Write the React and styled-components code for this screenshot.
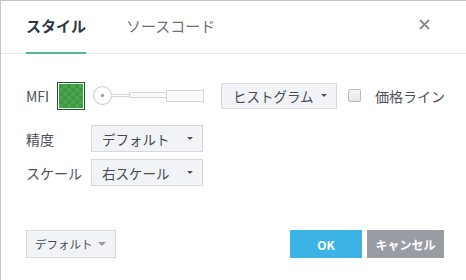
import React from "react";
import styled, { createGlobalStyle } from "styled-components";

const Global = createGlobalStyle`
  html, body { margin: 0; padding: 0; background: #fff; overflow: hidden; }
  body { font-family: "Noto Sans CJK JP", "Noto Sans", sans-serif; }
  * { box-sizing: border-box; }
`;

const Dialog = styled.div`
  width: 480px;
  height: 280px;
  border-top: 1px solid #c4c4c4;
  border-left: 1px solid #c4c4c4;
  background: #fff;
  display: flex;
  flex-direction: column;
`;

const Header = styled.div`
  height: 53px;
  border-bottom: 1px solid #e2e4e7;
  display: flex;
  align-items: stretch;
  padding-left: 25px;
  padding-right: 37px;
  width: 466px;
  flex: none;
`;

const Tab = styled.div`
  display: flex;
  align-items: center;
  font-size: 15px;
  line-height: 1;
  padding-bottom: 3px;
  margin-right: 40px;
  white-space: nowrap;
  color: ${(p) => (p.$active ? "#2e3641" : "#6a727c")};
  font-weight: ${(p) => (p.$active ? 700 : 400)};
  border-bottom: 2px solid ${(p) => (p.$active ? "#55b787" : "transparent")};
  margin-bottom: -1px;
`;

const Close = styled.div`
  margin-left: auto;
  display: flex;
  align-items: center;
  padding-bottom: 6px;
`;

const Body = styled.div`
  padding: 28px 0 0 25px;
  display: flex;
  flex-direction: column;
  gap: 7px;
`;

const Row = styled.div`
  display: flex;
  align-items: center;
  height: 27px;
  margin-bottom: ${(p) => p.$mb || 0}px;
`;

const Label = styled.span`
  font-size: 14px;
  color: #4c5158;
  width: ${(p) => p.$w}px;
  white-space: nowrap;
  flex: none;
`;

const Swatch = styled.div`
  width: 28px;
  height: 28px;
  border: 1px solid #14621a;
  padding: 1px;
  background: #fff;
  flex: none;
  div {
    width: 100%;
    height: 100%;
    background-color: #3e9a42;
    background-image:
      linear-gradient(45deg, #4aa64d 25%, transparent 25%, transparent 75%, #4aa64d 75%),
      linear-gradient(45deg, #4aa64d 25%, transparent 25%, transparent 75%, #4aa64d 75%);
    background-size: 8px 8px;
    background-position: 0 0, 4px 4px;
  }
`;

const SliderWrap = styled.div`
  margin-left: 8px;
  width: 112px;
  height: 20px;
  flex: none;
`;

const Select = styled.div`
  display: flex;
  align-items: center;
  height: ${(p) => p.$h || 27}px;
  width: ${(p) => p.$w}px;
  margin-left: ${(p) => p.$ml || 0}px;
  padding: 0 9px 0 ${(p) => p.$pl || 10}px;
  background: #f2f3f6;
  border: 1px solid #d6d8dc;
  font-size: ${(p) => p.$fs || 13.5}px;
  color: #454a51;
  white-space: nowrap;
  flex: none;
`;

const Caret = styled.span`
  width: 0;
  height: 0;
  border-left: ${(p) => p.$s || 3.5}px solid transparent;
  border-right: ${(p) => p.$s || 3.5}px solid transparent;
  border-top: ${(p) => p.$s || 3.5}px solid ${(p) => p.$c || "#50555c"};
  margin-left: auto;
`;

const Check = styled.span`
  width: 13px;
  height: 13px;
  margin-left: 11px;
  border: 1px solid #b6b9bd;
  border-radius: 2px;
  background: linear-gradient(#f6f6f6, #e4e5e7);
  flex: none;
`;

const CheckLabel = styled.span`
  margin-left: 14px;
  font-size: 14px;
  color: #4c5158;
  white-space: nowrap;
`;

const Footer = styled.div`
  margin-top: 44px;
  padding: 0 23px 0 25px;
  width: 466px;
  display: flex;
  align-items: center;
`;

const Spacer = styled.div`
  flex: 1;
`;

const Btn = styled.button`
  height: 28px;
  width: ${(p) => p.$w}px;
  margin-left: ${(p) => p.$ml || 0}px;
  border: none;
  background: ${(p) => p.$bg};
  color: #fff;
  font-family: inherit;
  font-size: 12px;
  font-weight: 700;
  white-space: nowrap;
  padding: 0;
`;

const Slider = () => (
  <svg width="112" height="20" viewBox="0 0 112 20">
    <circle cx="9.5" cy="9.5" r="9" fill="#fff" stroke="#c3c6cc" strokeWidth="1" />
    <circle cx="9.5" cy="9.5" r="1.7" fill="#9ea2a8" />
    <path d="M18.5 8.5 H36.5 V10.5 H18.5" fill="#fff" stroke="#d3d5d9" />
    <rect x="36.5" y="6.5" width="37" height="5" fill="#fafafa" stroke="#d3d5d9" />
    <rect x="73.5" y="4.5" width="37" height="11" fill="#fafafa" stroke="#d3d5d9" />
  </svg>
);

export default function App() {
  return (
    <>
      <Global />
      <Dialog>
        <Header>
          <Tab $active>スタイル</Tab>
          <Tab>ソースコード</Tab>
          <Close>
            <svg width="11" height="11" viewBox="0 0 11 11">
              <path d="M1 1 L10 10 M10 1 L1 10" stroke="#8a8e94" strokeWidth="2" />
            </svg>
          </Close>
        </Header>
        <Body>
          <Row $mb={9}>
            <Label $w={31}>MFI</Label>
            <Swatch>
              <div />
            </Swatch>
            <SliderWrap>
              <Slider />
            </SliderWrap>
            <Select $w={116} $ml={16} $h={26} $pl={11}>
              ヒストグラム
              <Caret />
            </Select>
            <Check />
            <CheckLabel>価格ライン</CheckLabel>
          </Row>
          <Row>
            <Label $w={65}>精度</Label>
            <Select $w={112}>
              デフォルト
              <Caret />
            </Select>
          </Row>
          <Row>
            <Label $w={65}>スケール</Label>
            <Select $w={112}>
              右スケール
              <Caret />
            </Select>
          </Row>
        </Body>
        <Footer>
          <Select $w={90} $h={28} $fs={11.5} $pl={8}>
            デフォルト
            <Caret $c="#9a9a9a" $s={4} />
          </Select>
          <Spacer />
          <Btn $w={72} $bg="#3bb4e5">OK</Btn>
          <Btn $w={77} $ml={5} $bg="#9a9ca3">キャンセル</Btn>
        </Footer>
      </Dialog>
    </>
  );
}
